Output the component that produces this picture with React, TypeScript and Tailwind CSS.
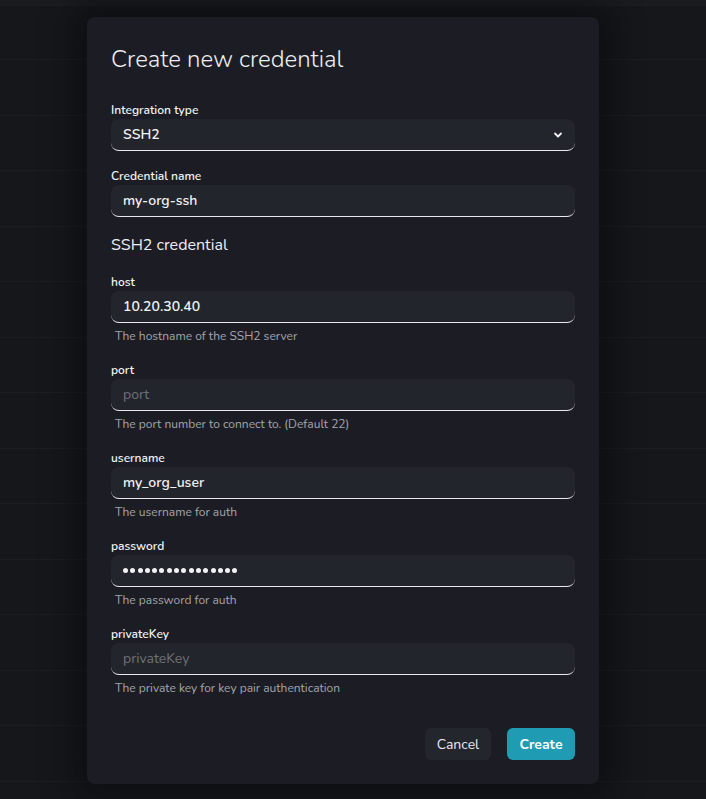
import React from "react";

const font = { fontFamily: "Nunito, Lato, 'Open Sans', sans-serif" };

function Label({ children }: { children: React.ReactNode }) {
  return (
    <div className="text-[12px] leading-[18px] font-semibold text-[#f1f2f4]">{children}</div>
  );
}

function Field({
  label,
  value,
  placeholder,
  helper,
  password,
}: {
  label: string;
  value?: string;
  placeholder?: string;
  helper?: string;
  password?: boolean;
}) {
  return (
    <div className="flex flex-col">
      <Label>{label}</Label>
      <div className="h-[32px] rounded-lg bg-[#23252d] border-b border-[#e8e9ec] flex items-center px-3">
        {value ? (
          password ? (
            <span className="flex gap-[2.3px]">
              {Array.from({ length: 16 }).map((_, i) => (
                <span key={i} className="w-[5px] h-[5px] rounded-full bg-[#f1f2f4]" />
              ))}
            </span>
          ) : (
            <span className="text-[14px] font-semibold text-[#f1f2f4]">{value}</span>
          )
        ) : (
          <span className="text-[14px] text-[#6e717a]">{placeholder}</span>
        )}
      </div>
      {helper && (
        <div className="mt-[5px] pl-1 text-[12px] leading-[16px] text-[#a3a5ab]">{helper}</div>
      )}
    </div>
  );
}

export default function App() {
  const rows = Array.from({ length: 14 });
  return (
    <div className="relative w-[706px] h-[799px] overflow-hidden bg-[#16171b]" style={font}>
      <div className="flex flex-col">
        <div className="h-[6px] bg-[#1a1b1f] border-b border-[#1d1e23]" />
        <div className="h-[54px] border-b border-[#1c1d22]" />
        {rows.map((_, i) => (
          <div key={i} className="h-[55.5px] border-b border-[#1c1d22]" />
        ))}
      </div>

      <div className="absolute left-[87px] top-[17px] w-[512px] h-[767px] rounded-lg bg-[#1c1d24] shadow-[0_0_30px_14px_rgba(8,9,11,0.55)] px-6 pt-6 pb-6 flex flex-col">
        <h1 className="text-[24px] leading-[32px] font-light text-[#eceef1] pt-[2px]">
          Create new credential
        </h1>

        <div className="mt-[26px] flex flex-col">
          <Label>Integration type</Label>
          <div className="h-[32px] rounded-lg bg-[#23252d] border-b border-[#e8e9ec] flex items-center justify-between pl-3 pr-3">
            <span className="text-[14px] font-semibold text-[#f1f2f4]">SSH2</span>
            <svg width="10" height="10" viewBox="0 0 10 10" fill="none">
              <path d="M2 3.5 L5 6.5 L8 3.5" stroke="#f1f2f4" strokeWidth="1.8" strokeLinecap="round" strokeLinejoin="round" />
            </svg>
          </div>
        </div>

        <div className="mt-4">
          <Field label="Credential name" value="my-org-ssh" />
        </div>

        <h2 className="mt-[16px] text-[16px] leading-[24px] text-[#eceef1]">SSH2 credential</h2>

        <div className="mt-[16px] flex flex-col gap-[17px]">
          <Field label="host" value="10.20.30.40" helper="The hostname of the SSH2 server" />
          <Field label="port" placeholder="port" helper="The port number to connect to. (Default 22)" />
          <Field label="username" value="my_org_user" helper="The username for auth" />
          <Field label="password" value="password" password helper="The password for auth" />
          <Field label="privateKey" placeholder="privateKey" helper="The private key for key pair authentication" />
        </div>

        <div className="mt-auto flex justify-end gap-4">
          <button className="h-[32px] w-[66px] rounded-md bg-[#24262e] text-[14px] text-[#e8e9ec]">
            Cancel
          </button>
          <button className="h-[32px] w-[68px] rounded-md bg-[#1f9cb4] text-[14px] font-bold text-white">
            Create
          </button>
        </div>
      </div>
    </div>
  );
}
